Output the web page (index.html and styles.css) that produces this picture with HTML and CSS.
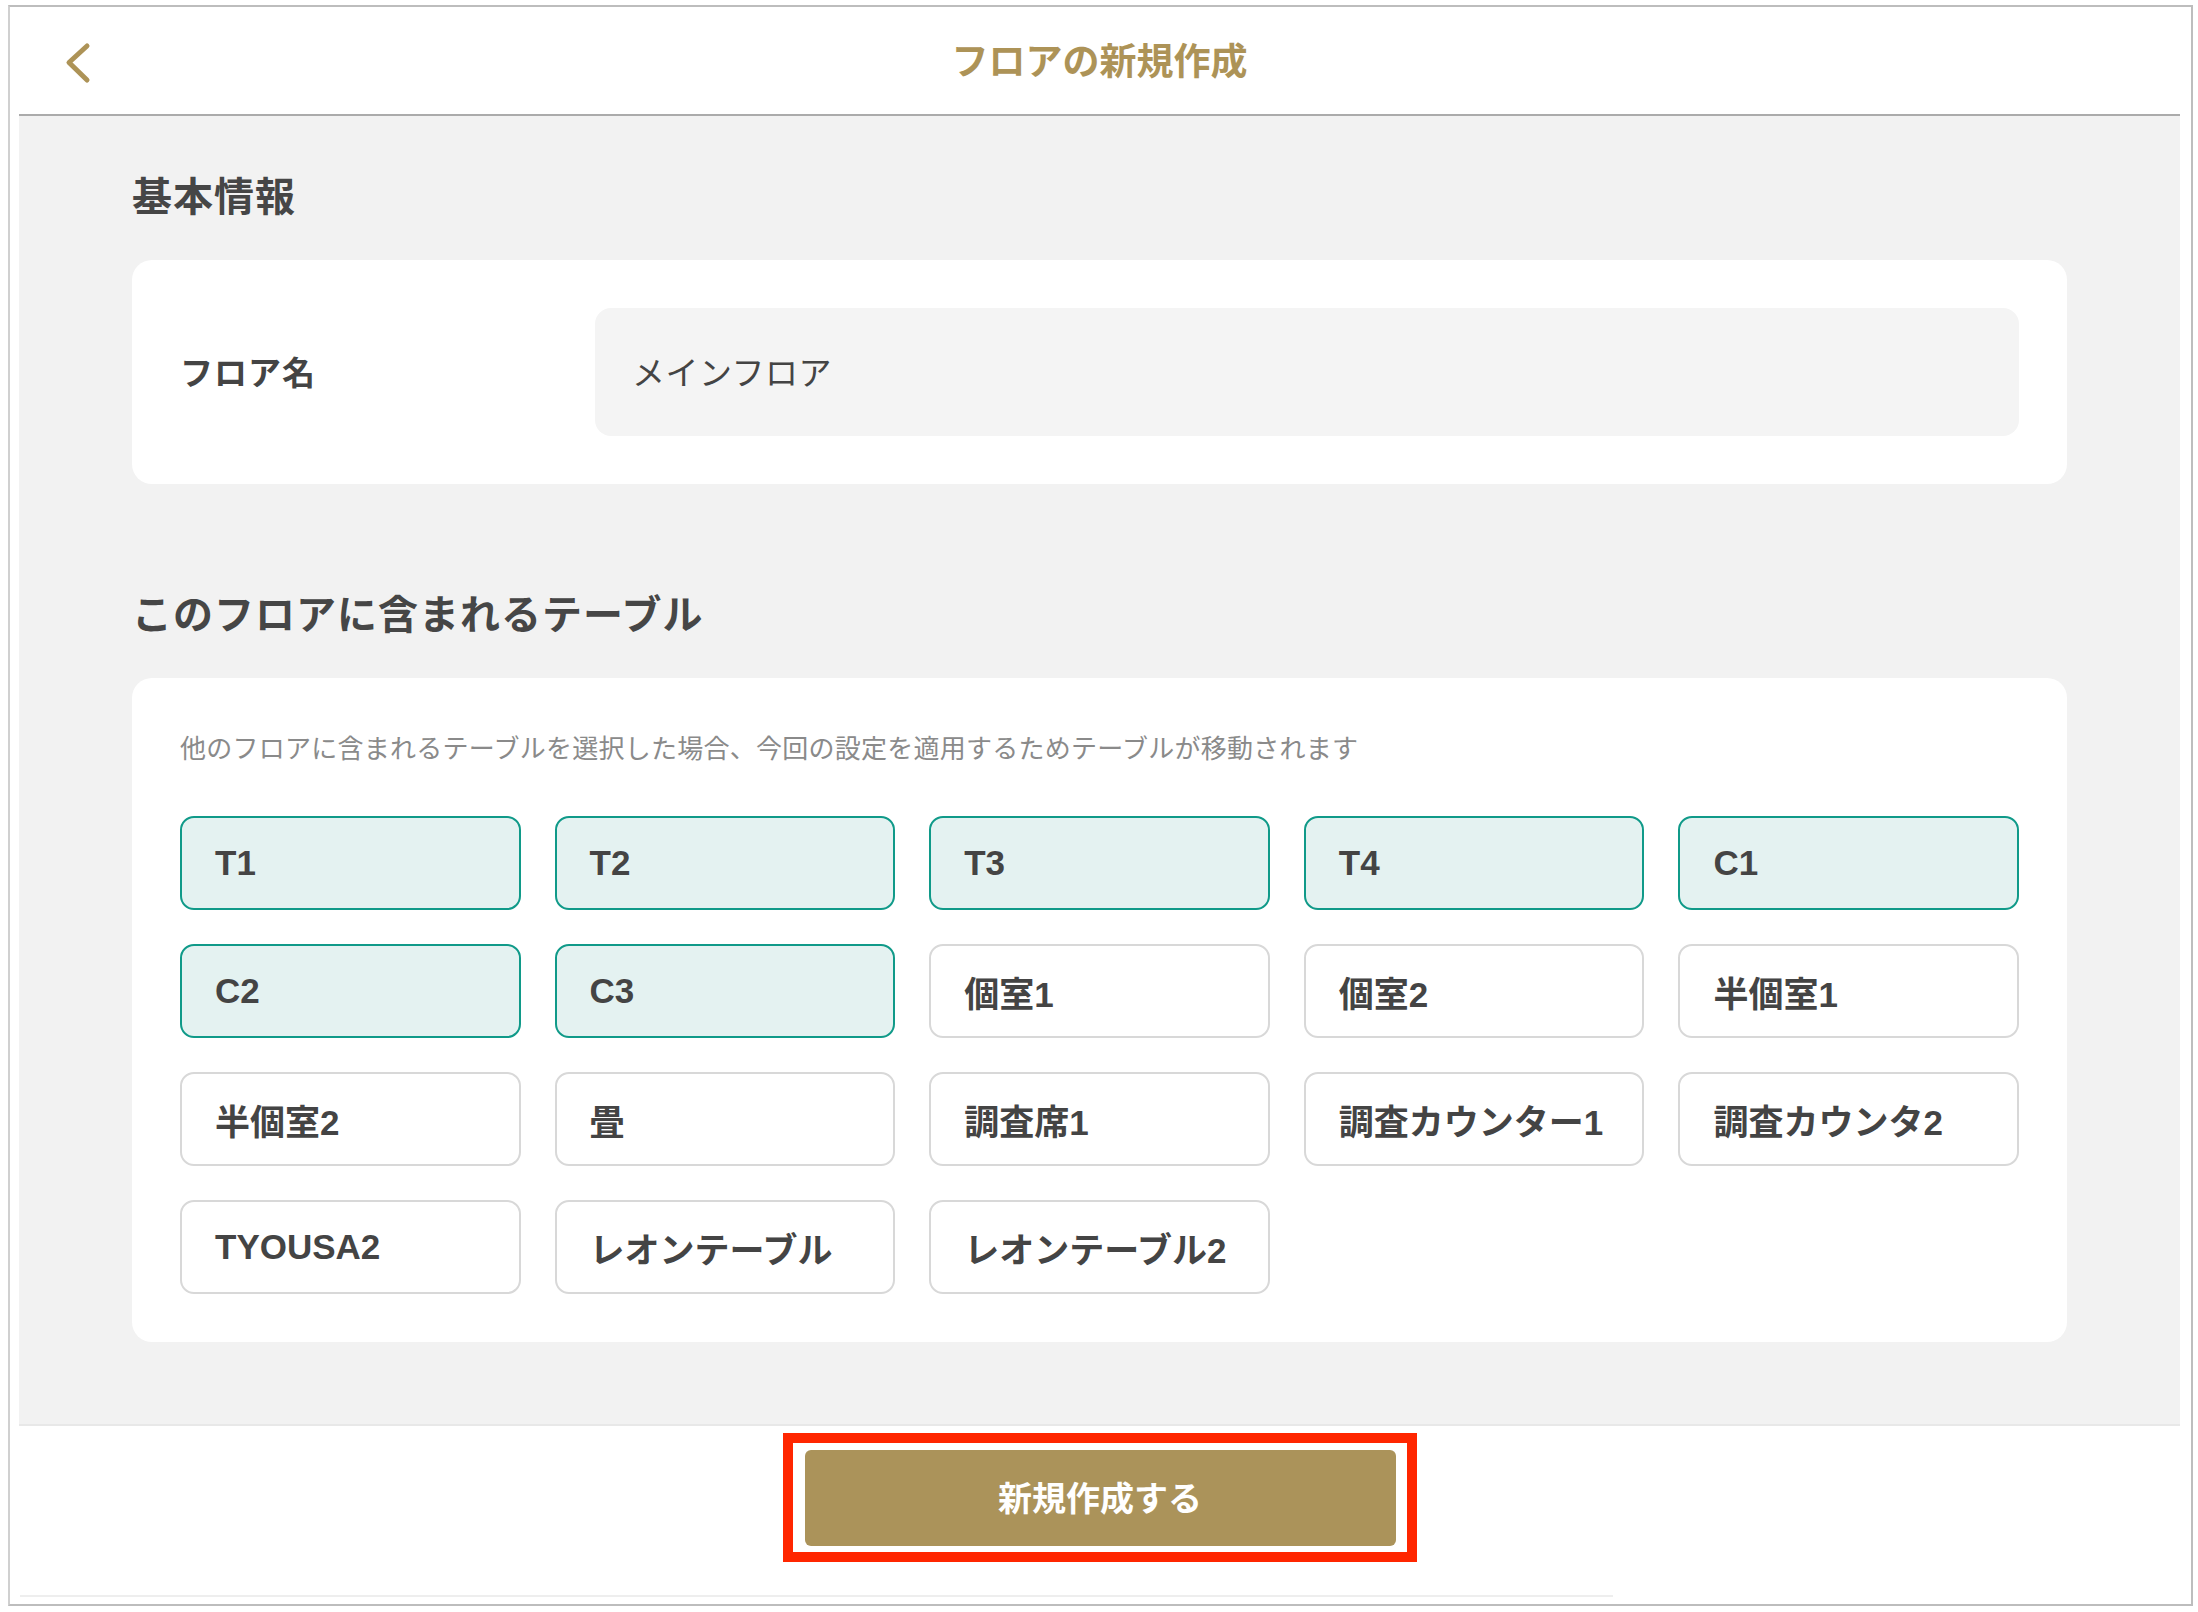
FILE: index.html
```html
<!doctype html>
<html lang="ja">
  <head>
    <meta charset="UTF-8" />
    <meta name="viewport" content="width=device-width, initial-scale=1.0" />
    <title>フロアの新規作成</title>
    <link rel="stylesheet" href="styles.css">
  </head>
  <body>
    <div class="frame">
      <div class="screen">
        <header class="topbar">
          <button class="back" aria-label="戻る">
            <svg width="28" height="44" viewBox="0 0 28 44">
              <path d="M23 5 L5 21.5 L23 39" fill="none" stroke="#ad9357" stroke-width="5" stroke-linecap="round" stroke-linejoin="round" />
            </svg>
          </button>
          <h1 class="page-title">フロアの新規作成</h1>
          <span></span>
        </header>

        <main class="content">
          <h2 class="section-title">基本情報</h2>
          <section class="card info-card">
            <label class="field-label">フロア名</label>
            <div class="text-input">メインフロア</div>
          </section>

          <h2 class="section-title second">このフロアに含まれるテーブル</h2>
          <section class="card tables-card">
            <p class="note">他のフロアに含まれるテーブルを選択した場合、今回の設定を適用するためテーブルが移動されます</p>
            <div class="table-grid">
              <button class="table-btn selected">T1</button>
              <button class="table-btn selected">T2</button>
              <button class="table-btn selected">T3</button>
              <button class="table-btn selected">T4</button>
              <button class="table-btn selected">C1</button>
              <button class="table-btn selected">C2</button>
              <button class="table-btn selected">C3</button>
              <button class="table-btn">個室1</button>
              <button class="table-btn">個室2</button>
              <button class="table-btn">半個室1</button>
              <button class="table-btn">半個室2</button>
              <button class="table-btn">畳</button>
              <button class="table-btn">調査席1</button>
              <button class="table-btn">調査カウンター1</button>
              <button class="table-btn">調査カウンタ2</button>
              <button class="table-btn">TYOUSA2</button>
              <button class="table-btn">レオンテーブル</button>
              <button class="table-btn">レオンテーブル2</button>
            </div>
          </section>
        </main>

        <footer class="footer">
          <div class="highlight">
            <button class="submit">新規作成する</button>
          </div>
          <div class="home-bar"></div>
        </footer>
      </div>
    </div>
  </body>
</html>
```

FILE: styles.css
```css
* {
  box-sizing: border-box;
}
body {
  margin: 0;
  background: #fff;
  font-family: "Noto Sans CJK JP", "Noto Sans", sans-serif;
  color: #444;
}
button {
  font-family: inherit;
}
.frame {
  width: 2185px;
  height: 1601px;
  margin: 5px 0 0 8px;
  border: 2px solid #bdbdbd;
  border-left-color: #d0d0d0;
}
.screen {
  height: 100%;
  padding: 0 11px 0 9px;
  display: flex;
  flex-direction: column;
}
.topbar {
  height: 109px;
  border-bottom: 2px solid #ababab;
  display: grid;
  grid-template-columns: 1fr auto 1fr;
  align-items: center;
}
.back {
  justify-self: start;
  margin: 4px 0 0 45px;
  padding: 0;
  border: none;
  background: none;
  display: flex;
}
.page-title {
  margin: 0 0 2px;
  font-size: 37px;
  font-weight: bold;
  color: #ad9357;
  line-height: 1.2;
}
.content {
  background: #f2f2f2;
  padding: 56px 113px 82px 113px;
}
.section-title {
  margin: 0 0 44px;
  font-size: 40px;
  line-height: 44px;
  letter-spacing: 1px;
  font-weight: bold;
  color: #464646;
}
.section-title.second {
  margin-top: 106px;
}
.card {
  background: #fff;
  border-radius: 20px;
  padding: 48px;
}
.info-card {
  display: flex;
  align-items: center;
}
.field-label {
  width: 415px;
  font-size: 33px;
  letter-spacing: 1px;
  font-weight: bold;
  color: #444;
  padding-bottom: 2px;
}
.text-input {
  flex: 1;
  height: 128px;
  background: #f4f4f4;
  border-radius: 16px;
  display: flex;
  align-items: center;
  padding: 0 0 2px 37px;
  font-size: 33px;
  letter-spacing: 0.5px;
  color: #444;
}
.note {
  margin: 0 0 48px;
  font-size: 26px;
  line-height: 42px;
  letter-spacing: 0.25px;
  color: #8a8a8a;
}
.table-grid {
  display: grid;
  grid-template-columns: repeat(5, 1fr);
  gap: 34px;
}
.table-btn {
  height: 94px;
  border: 2px solid #d8d8d8;
  border-radius: 14px;
  background: #fff;
  text-align: left;
  padding: 0 0 0 33px;
  font-family: "Liberation Sans", "Noto Sans CJK JP", sans-serif;
  font-size: 35px;
  font-weight: bold;
  color: #444;
}
.table-btn.selected {
  background: #e4f2f1;
  border-color: #109a89;
}
.footer {
  flex: 1;
  border-top: 2px solid #e8e8e8;
  padding-top: 7px;
  display: flex;
  flex-direction: column;
  align-items: center;
}
.highlight {
  border: 10px solid #ff2600;
  padding: 7px 11px 6px 12px;
}
.submit {
  display: block;
  width: 591px;
  height: 96px;
  border: none;
  border-radius: 6px;
  background: #ab935a;
  color: #fff;
  font-size: 34px;
  font-weight: bold;
  padding-bottom: 4px;
}
.home-bar {
  align-self: flex-start;
  width: 1593px;
  height: 2px;
  margin: 33px 0 0 1px;
  background: #eeeeee;
}
```
